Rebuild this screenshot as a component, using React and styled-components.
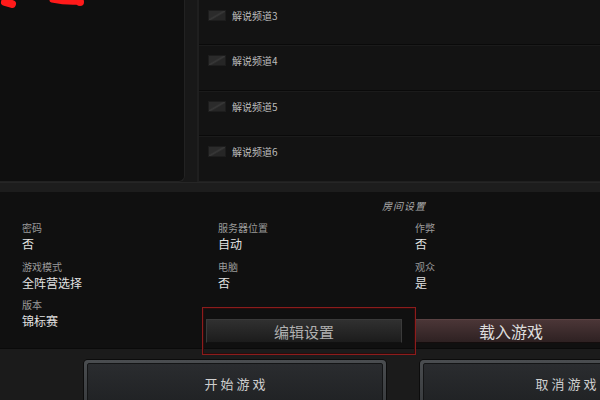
import React from 'react';
import styled, { createGlobalStyle } from 'styled-components';

const cjk = `"Noto Sans CJK SC", "Noto Sans", sans-serif`;

const GlobalStyle = createGlobalStyle`
  html, body {
    margin: 0;
    padding: 0;
    background: #161616;
  }
  * {
    box-sizing: border-box;
  }
`;

const Screen = styled.div`
  position: relative;
  width: 600px;
  height: 400px;
  overflow: hidden;
  background: #181818;
  font-family: ${cjk};
`;

const Scribble = styled.svg`
  position: absolute;
  left: 0;
  top: 0;
  pointer-events: none;
  z-index: 5;
`;

const TopArea = styled.div`
  display: flex;
  gap: 12px;
  height: 182px;
`;

const TeamPanel = styled.div`
  width: 185px;
  flex-shrink: 0;
  background: #0f0f0f;
  border-right: 1px solid #222;
  border-bottom: 1px solid #222;
  border-bottom-right-radius: 6px;
`;

const ChannelList = styled.div`
  flex: 1;
  background: #131313;
  border-left: 2px solid #1f1f1f;
  border-bottom: 1px solid #202020;
  display: flex;
  flex-direction: column;
`;

const ChannelRow = styled.div`
  height: 46px;
  display: flex;
  align-items: flex-start;
  gap: 6px;
  padding: 9px 0 0 9px;
  border-bottom: 1px solid #0a0a0a;
  box-shadow: 0 1px 0 #1b1b1b;
  &:last-child {
    border-bottom: none;
    box-shadow: none;
  }
`;

const Check = styled.span`
  width: 18px;
  height: 11px;
  margin-top: 1px;
  border: 1px solid #1d1d1d;
  background: linear-gradient(150deg, #2b2b2b 40%, #383838 50%, #262626 60%);
`;

const ChannelName = styled.span`
  font-size: 10px;
  line-height: 14px;
  color: #bdbdbd;
`;

const Band = styled.div`
  height: 10px;
  background: #1d1d1d;
  border-top: 1px solid #262626;
`;

const Settings = styled.div`
  height: 156px;
  background: #101010;
  padding-top: 8px;
`;

const SectionTitle = styled.div`
  margin-left: 382px;
  font-size: 10px;
  line-height: 12px;
  font-style: italic;
  color: #a8a8a8;
  letter-spacing: 1px;
`;

const Grid = styled.div`
  display: grid;
  grid-template-columns: 196px 197px 1fr;
  row-gap: 9px;
  padding-left: 22px;
  margin-top: 9px;
`;

const Cell = styled.div`
  display: flex;
  flex-direction: column;
`;

const Label = styled.span`
  font-size: 10px;
  line-height: 14px;
  color: #9a9a9a;
`;

const Value = styled.span`
  font-size: 12px;
  line-height: 14px;
  color: #e2e2e2;
  margin-top: 2px;
`;

const ActionRow = styled.div`
  display: flex;
  align-items: flex-start;
  margin-top: 8px;
`;

const VersionCell = styled(Cell)`
  width: 202px;
  flex-shrink: 0;
  padding-left: 22px;
`;

const EditFrame = styled.div`
  position: relative;
  z-index: 1;
  width: 214px;
  height: 48px;
  flex-shrink: 0;
  margin-top: 9px;
  padding: 11px 13px 0 3px;
  border: 1px solid #8c1c1c;
  box-shadow: inset 0 0 0 1px #2a0c0c;
`;

const EditButton = styled.div`
  height: 24px;
  display: flex;
  align-items: center;
  justify-content: center;
  font-size: 15px;
  color: #b0b0b0;
  background: linear-gradient(#303030, #1c1c1c);
  border: 1px solid #3a3a3a;
  border-bottom-color: #111;
`;

const LoadButton = styled.div`
  width: 190px;
  height: 24px;
  flex-shrink: 0;
  margin-top: 21px;
  display: flex;
  align-items: center;
  justify-content: center;
  font-size: 16px;
  color: #dddddd;
  background: linear-gradient(#4b3637, #2e2122);
  border-top: 1px solid #5a4243;
  border-bottom: 1px solid #140d0d;
`;

const BottomBar = styled.div`
  display: flex;
  gap: 34px;
  height: 52px;
  padding: 11px 0 0 84px;
  background: #1b1b1b;
  border-top: 1px solid #0a0a0a;
`;

const BigButton = styled.div`
  width: ${p => p.$width || 302}px;
  height: 52px;
  flex-shrink: 0;
  padding: 3px;
  border-radius: 4px;
  background: linear-gradient(#4a4d50, #35383b);
  box-shadow: 0 0 0 1px #0c0c0c;
`;

const BigButtonFace = styled.div`
  height: 100%;
  border-radius: 2px;
  border: 1px solid #141516;
  background: linear-gradient(#2a2c2f, #1f2123);
  display: flex;
  justify-content: center;
  padding: 10px 0 0 3px;
  font-size: 13px;
  line-height: 20px;
  letter-spacing: 3px;
  color: #cfcfcf;
`;

const channels = ['解说频道3', '解说频道4', '解说频道5', '解说频道6'];

const App = () => (
  <Screen>
    <GlobalStyle />
    <Scribble width="100" height="12" viewBox="0 0 100 12">
      <path d="M5 2 L12 4" stroke="#ff1a1a" strokeWidth="8" fill="none" strokeLinecap="round" />
      <path d="M52 0 Q66 3 80 2" stroke="#ff1a1a" strokeWidth="5" fill="none" strokeLinecap="round" />
      <circle cx="80" cy="2" r="4" fill="#ff1a1a" />
    </Scribble>

    <TopArea>
      <TeamPanel />
      <ChannelList>
        {channels.map(name => (
          <ChannelRow key={name}>
            <Check />
            <ChannelName>{name}</ChannelName>
          </ChannelRow>
        ))}
      </ChannelList>
    </TopArea>

    <Band />

    <Settings>
      <SectionTitle>房间设置</SectionTitle>
      <Grid>
        <Cell><Label>密码</Label><Value>否</Value></Cell>
        <Cell><Label>服务器位置</Label><Value>自动</Value></Cell>
        <Cell><Label>作弊</Label><Value>否</Value></Cell>
        <Cell><Label>游戏模式</Label><Value>全阵营选择</Value></Cell>
        <Cell><Label>电脑</Label><Value>否</Value></Cell>
        <Cell><Label>观众</Label><Value>是</Value></Cell>
      </Grid>
      <ActionRow>
        <VersionCell><Label>版本</Label><Value>锦标赛</Value></VersionCell>
        <EditFrame>
          <EditButton>编辑设置</EditButton>
        </EditFrame>
        <LoadButton>载入游戏</LoadButton>
      </ActionRow>
    </Settings>

    <BottomBar>
      <BigButton><BigButtonFace>开始游戏</BigButtonFace></BigButton>
      <BigButton $width={292}><BigButtonFace>取消游戏</BigButtonFace></BigButton>
    </BottomBar>
  </Screen>
);

export default App;
